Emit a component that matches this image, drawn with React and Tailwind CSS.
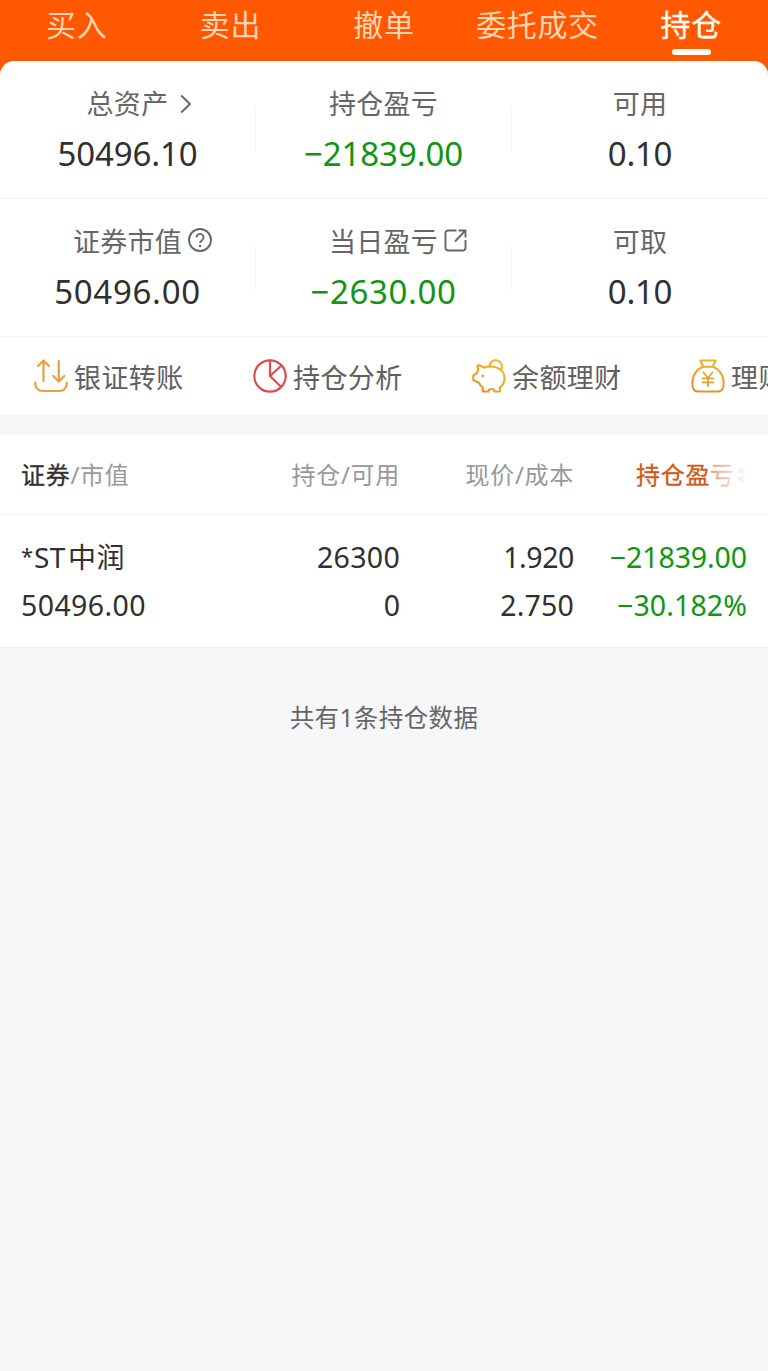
import clsx from 'clsx'

const tabs = ['买入', '卖出', '撤单', '委托成交', '持仓']

function ChevronIcon() {
  return (
    <svg className="w-3 h-5 ml-3" viewBox="0 0 12 20" fill="none" stroke="#666" strokeWidth="1.9">
      <path d="M1.2 1.5 10 10l-8.800 8.500" />
    </svg>
  )
}

function HelpIcon() {
  return (
    <svg className="w-6 h-6 ml-1.5 -mt-1" viewBox="0 0 24 24" fill="none" stroke="#666" strokeWidth="1.9">
      <circle cx="12" cy="12" r="11" />
      <path d="M8.500 9.500a3.500 3.500 0 1 1 5.600 2.700c-1.300 1-2.100 1.500-2.100 2.900" />
      <path d="M12 16.900v2.200" strokeWidth="2.200" />
    </svg>
  )
}

function ShareIcon() {
  return (
    <svg className="w-[23px] h-[23px] ml-1.5 -mt-1" viewBox="0 0 23 23" fill="none" stroke="#666" strokeWidth="1.9">
      <path d="M12.500 1.500H4a2.500 2.500 0 0 0-2.500 2.500v15A2.500 2.500 0 0 0 4 21.500h15a2.500 2.500 0 0 0 2.500-2.500v-8" />
      <path d="M14.500 1.500h7v7M21.300 1.700 11 12.500" />
    </svg>
  )
}

function TransferIcon() {
  return (
    <svg className="w-[34px] h-[34px]" viewBox="0 0 34 34" fill="none" stroke="#e8a03c" strokeWidth="2.200" strokeLinecap="round" strokeLinejoin="round">
      <path d="M9.500 22V2M4 7l5.500-5.500L15 7" />
      <path d="M24.800 2v20M19.300 17l5.500 5.500 5.500-5.500" />
      <path d="M1.300 23.500v1.500a7 7 0 0 0 7 7h17.400a7 7 0 0 0 7-7v-1.500" />
    </svg>
  )
}

function PieIcon() {
  return (
    <svg className="w-[34px] h-[34px]" viewBox="0 0 34 34" fill="none" stroke="#dc4c4c" strokeWidth="2.200" strokeLinejoin="round">
      <circle cx="17" cy="17" r="15.700" />
      <path d="M17 1.500V17l11 10.800M17 17 28.500 6.500" />
    </svg>
  )
}

function PiggyIcon() {
  return (
    <svg className="w-[34px] h-[34px]" viewBox="0 0 34 34" fill="none" stroke="url(#piggy)" strokeWidth="2.100" strokeLinecap="round" strokeLinejoin="round">
      <defs>
        <linearGradient id="piggy" x1="0" y1="34" x2="34" y2="0" gradientUnits="userSpaceOnUse">
          <stop stopColor="#e78a2b" />
          <stop offset="1" stopColor="#efc21d" />
        </linearGradient>
      </defs>
      <path d="M5.500 6.500q3.500-.8 6 2.200c2-.9 4.200-1.200 6.800-1.200 8.500 0 14.200 4.800 14.200 11.700 0 4-1.600 7-4.600 9.500v3.800h-5.300l-1-2.300h-4.200l-1 2.300h-5.600v-4c-1.700-1.200-3-2.800-3.900-4.800L1.300 21v-4.600l3.200-1.900 1.800-3.500z" />
      <path d="M17.500 7.300a6.200 6.200 0 1 1 11.400 3.600" />
      <circle cx="10.800" cy="17" r="1.200" fill="#e78a2b" stroke="none" />
    </svg>
  )
}

function MoneyBagIcon() {
  return (
    <svg className="w-[34px] h-[34px]" viewBox="0 0 34 34" fill="none" stroke="url(#bag)" strokeWidth="2.100" strokeLinecap="round" strokeLinejoin="round">
      <defs>
        <linearGradient id="bag" x1="0" y1="34" x2="10" y2="0" gradientUnits="userSpaceOnUse">
          <stop stopColor="#e58a35" />
          <stop offset="1" stopColor="#ecb52c" />
        </linearGradient>
      </defs>
      <path d="M9.300 1.500h15.400l-3 6.200h-9.400z" />
      <path d="M12.300 7.800C5.500 10 1.300 16.500 1.300 24.500c0 5.500 1.700 8 5.700 8h20c4 0 5.700-2.500 5.700-8 0-8-4.200-14.500-11-16.700" />
      <path d="m12.500 13.500 4.500 5.500 4.500-5.500M17 19v8M11.500 19.300h11M11.500 23.300h11" strokeWidth="1.800" />
    </svg>
  )
}

const actions = [
  { label: '银证转账', Icon: TransferIcon },
  { label: '持仓分析', Icon: PieIcon },
  { label: '余额理财', Icon: PiggyIcon },
  { label: '理财', Icon: MoneyBagIcon },
]

const stats = [
  [
    { label: '总资产', value: '50496.10', Icon: ChevronIcon, tracking: 'tracking-[-0.1px]' },
    { label: '持仓盈亏', value: '−21839.00', green: true, tracking: 'tracking-[-0.1px]' },
    { label: '可用', value: '0.10', tracking: 'tracking-[-0.3px]' },
  ],
  [
    { label: '证券市值', value: '50496.00', Icon: HelpIcon, tracking: 'tracking-[0.7px]' },
    { label: '当日盈亏', value: '−2630.00', green: true, Icon: ShareIcon, tracking: 'tracking-[0.6px]' },
    { label: '可取', value: '0.10', tracking: 'tracking-[-0.3px]' },
  ],
]

function Stat({ label, value, green, Icon, tracking, divider }) {
  return (
    <div className="flex-1 flex items-center h-[138px]">
      <div className="flex-1 h-full pt-[23px] flex flex-col items-center">
        <div className="flex items-center h-10 text-[27px] tracking-[0.3px] text-[#666]">
          {label}
          {/* icon hangs outside so the label stays centred */}
          {Icon && <span className="w-0 flex"><span className="shrink-0 flex"><Icon /></span></span>}
        </div>
        <div className={clsx('h-[60px] leading-[60px] text-[33px]', tracking, green ? 'text-[#109610]' : 'text-[#303030]')}>
          {value}
        </div>
      </div>
      {divider && <div className="w-px h-11 bg-[#f3f3f3]" />}
    </div>
  )
}

export default function App() {
  return (
    <div className="w-[768px] h-[1371px] overflow-hidden bg-[#f6f7f9] font-['Noto_Sans','Noto_Sans_CJK_SC',sans-serif] whitespace-nowrap">
      <div className="bg-[#ff5800]">
        {/* Trade tabs */}
        <nav className="flex h-[61px]">
          {tabs.map((tab) => {
            const active = tab === '持仓'
            return (
              <div
                key={tab}
                className={clsx(
                  'flex-1 flex flex-col items-center text-[30px] tracking-[0.7px]',
                  active ? 'text-[#fffaf2] [-webkit-text-stroke:0.4px]' : 'text-[#ffd6b5]'
                )}
              >
                <span className="h-[49px] leading-[49px]">{tab}</span>
                {active && <span className="w-[39px] h-[6px] rounded-full bg-[#fffaf5]" />}
              </div>
            )
          })}
        </nav>

        {/* Account summary */}
        <section className="bg-white rounded-t-[14px]">
          {stats.map((row, i) => (
            <div key={i} className="flex border-b border-[#f3f3f3] h-[138px]">
              {row.map((item, j) => (
                <Stat key={item.label} {...item} divider={j < 2} />
              ))}
            </div>
          ))}
          <div className="flex h-[78px] pl-[34px] overflow-hidden">
            {actions.map(({ label, Icon }) => (
              <div key={label} className="w-[219px] shrink-0 flex items-center text-[27px] tracking-[0.4px] text-[#606060]">
                <Icon />
                <span className="ml-1.5 pt-1">{label}</span>
              </div>
            ))}
          </div>
        </section>
      </div>

      {/* Holdings */}
      <section className="mt-5 bg-white border-b border-[#f0f0f0]">
        <div className="grid grid-cols-[200px_179px_174px_173px] pl-[21px] h-20 pt-px items-center text-[24px] tracking-[0.7px] text-[#999] text-right border-b border-[#f3f3f3]">
          <div className="text-left"><span className="text-[#303030] [-webkit-text-stroke:0.3px]">证券</span>/市值</div>
          <div>持仓/可用</div>
          <div>现价/成本</div>
          <div className="relative justify-self-end w-[111px] flex items-center overflow-hidden text-[#cc5a1a] [-webkit-text-stroke:0.3px]">
            持仓盈亏
            <svg className="w-3.5 h-5 shrink-0" viewBox="0 0 14 20" fill="#cc5a1a">
              <path d="M7 1l5 7H2zM7 19l5-7H2z" />
            </svg>
            <div className="absolute inset-y-0 right-0 w-[38px] bg-linear-to-r from-white/40 to-white" />
          </div>
        </div>
        <div className="grid grid-cols-[200px_179px_174px_173px] pl-[21px] h-[132px] pt-[18px] text-[28.5px] leading-[48px] text-[#303030] text-right">
          <div className="text-left">
            <div className="flex h-12 tracking-[0.5px]">
              <span className="w-[13px] text-[22px] leading-[45px]">*</span>
              <span className="text-[28px]">ST<span className="ml-0.5">中润</span></span>
            </div>
            <div className="tracking-[0.4px]">50496.00</div>
          </div>
          <div>
            <div className="tracking-[0.3px]">26300</div>
            <div>0</div>
          </div>
          <div>
            <div className="tracking-[-0.4px]">1.920</div>
            <div className="tracking-[0.2px]">2.750</div>
          </div>
          <div className="text-[#109610]">
            <div className="tracking-[-0.1px]">−21839.00</div>
            <div className="tracking-[0.1px]">−30.182%</div>
          </div>
        </div>
      </section>

      <p className="mt-[50px] text-center text-[24.5px] leading-10 tracking-[0.4px] text-[#666]">共有1条持仓数据</p>
    </div>
  )
}
